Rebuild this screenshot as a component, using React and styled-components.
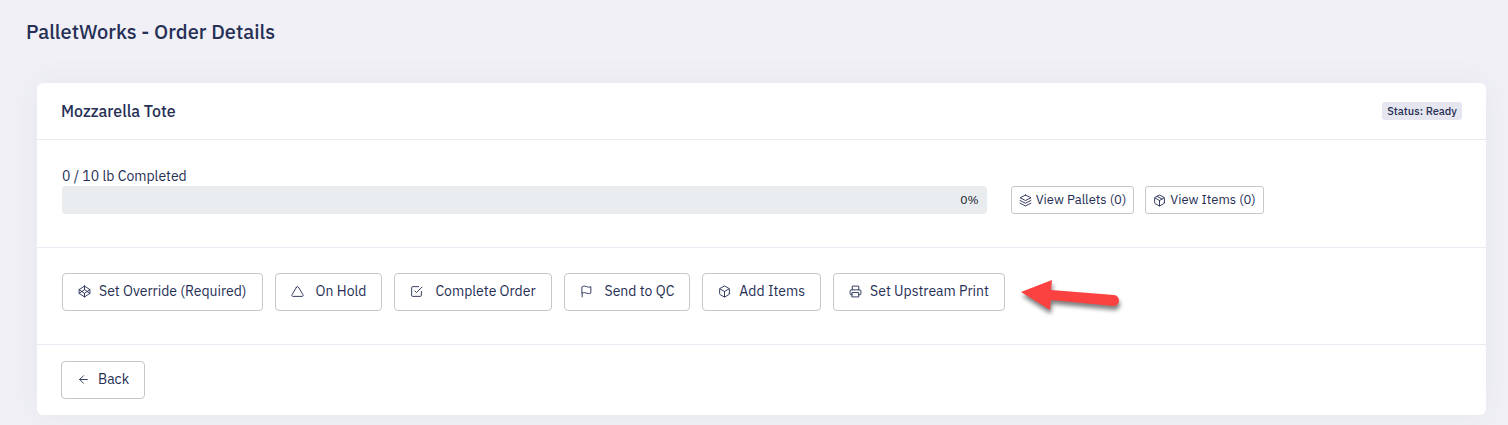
import React from "react";
import styled, { createGlobalStyle } from "styled-components";
import {
  FiArrowLeft,
  FiBox,
  FiCheckSquare,
  FiCodepen,
  FiFlag,
  FiLayers,
  FiPackage,
  FiPrinter,
  FiTriangle,
} from "react-icons/fi";

const GlobalStyle = createGlobalStyle`
  *, *::before, *::after { box-sizing: border-box; }
  body {
    margin: 0;
    background: #f0f0f6;
    color: #262f55;
    font-family: "IBM Plex Sans", Roboto, "Liberation Sans", sans-serif;
    font-size: 14px;
    line-height: 20px;
  }
`;

const Page = styled.main`
  padding: 20px 22px 10px 26px;
`;

const PageTitle = styled.h1`
  margin: 0 0 39px;
  font-size: 20px;
  font-weight: 500;
  line-height: 24px;
`;

const Card = styled.section`
  margin-left: 11px;
  background: #fff;
  border-radius: 6px;
  box-shadow: 0 0 32px rgba(60, 60, 110, 0.06);
`;

const CardHeader = styled.header`
  display: flex;
  align-items: center;
  justify-content: space-between;
  padding: 16px 24px;
  border-bottom: 1px solid #e7ebee;
`;

const CardTitle = styled.h2`
  margin: 0;
  font-size: 16px;
  font-weight: 500;
  line-height: 24px;
`;

const Badge = styled.span`
  padding: 0 5px;
  border-radius: 3px;
  background: #e6e6f0;
  font-size: 11px;
  font-weight: 500;
  line-height: 18px;
`;

const ProgressSection = styled.div`
  display: grid;
  grid-template-columns: repeat(12, 1fr);
  column-gap: 24px;
  align-items: end;
  padding: 26px 25px 33px;
  border-bottom: 1px solid #ececf4;
`;

const ProgressColumn = styled.div`
  grid-column: span 8;
`;

const ProgressLabel = styled.div`
  font-size: 14px;
  line-height: 20px;
`;

const ProgressTrack = styled.div`
  display: flex;
  align-items: center;
  justify-content: flex-end;
  height: 28px;
  padding-right: 8px;
  border-radius: 4px;
  background: #e8ecef;
  color: #16182c;
  font-size: 12px;
`;

const ViewButtons = styled.div`
  grid-column: span 4;
  display: flex;
  gap: 11px;
`;

const Button = styled.button`
  display: inline-flex;
  align-items: center;
  height: 38px;
  gap: ${(p) => (p.$spaced ? 12 : 8)}px;
  padding: 0 15px 2px;
  border: 1px solid #c6c7cb;
  border-radius: 4px;
  background: #fff;
  color: #262f55;
  font-family: inherit;
  font-size: 14px;
  line-height: 20px;
  white-space: nowrap;
  cursor: pointer;

  svg {
    flex: none;
    width: 13px;
    height: 13px;
    stroke-width: 1.7;
  }
`;

const SmallButton = styled(Button)`
  height: 28px;
  gap: 4px;
  padding: 0 7px;
  border-radius: 3px;
  font-size: 13px;
`;

const ActionSection = styled.div`
  display: flex;
  flex-wrap: wrap;
  gap: 12px;
  padding: 25px 25px 33px;
  border-bottom: 1px solid #e9e9f2;
`;

const Arrow = styled.svg`
  width: 104px;
  height: 38px;
  overflow: visible;
  filter: drop-shadow(1px 4px 2px rgba(0, 0, 0, 0.5));
`;

const CardFooter = styled.footer`
  padding: 16px 24px;
`;

const actions = [
  { label: "Set Override (Required)", Icon: FiCodepen },
  { label: "On Hold", Icon: FiTriangle, spaced: true },
  { label: "Complete Order", Icon: FiCheckSquare, spaced: true },
  { label: "Send to QC", Icon: FiFlag, spaced: true },
  { label: "Add Items", Icon: FiBox },
  { label: "Set Upstream Print", Icon: FiPrinter },
];

export default function App() {
  return (
    <>
      <GlobalStyle />
      <Page>
        <PageTitle>PalletWorks - Order Details</PageTitle>
        <Card>
          <CardHeader>
            <CardTitle>Mozzarella Tote</CardTitle>
            <Badge>Status: Ready</Badge>
          </CardHeader>
          <ProgressSection>
            <ProgressColumn>
              <ProgressLabel id="progress-label">0 / 10 lb Completed</ProgressLabel>
              <ProgressTrack
                role="progressbar"
                aria-labelledby="progress-label"
                aria-valuenow={0}
                aria-valuemin={0}
                aria-valuemax={100}
              >
                0%
              </ProgressTrack>
            </ProgressColumn>
            <ViewButtons>
              <SmallButton type="button">
                <FiLayers aria-hidden="true" />
                View Pallets (0)
              </SmallButton>
              <SmallButton type="button">
                <FiPackage aria-hidden="true" />
                View Items (0)
              </SmallButton>
            </ViewButtons>
          </ProgressSection>
          <ActionSection>
            {actions.map(({ label, Icon, spaced }) => (
              <Button key={label} type="button" $spaced={spaced}>
                <Icon aria-hidden="true" />
                {label}
              </Button>
            ))}
            <Arrow viewBox="0 0 104 38" aria-hidden="true">
              <path
                d="M4 19 L35 7 L34 17 L97 22 A5.5 5.5 0 0 1 96 33 L34 27 L33 37 Z"
                fill="#fc4141"
              />
            </Arrow>
          </ActionSection>
          <CardFooter>
            <Button type="button">
              <FiArrowLeft aria-hidden="true" />
              Back
            </Button>
          </CardFooter>
        </Card>
      </Page>
    </>
  );
}
